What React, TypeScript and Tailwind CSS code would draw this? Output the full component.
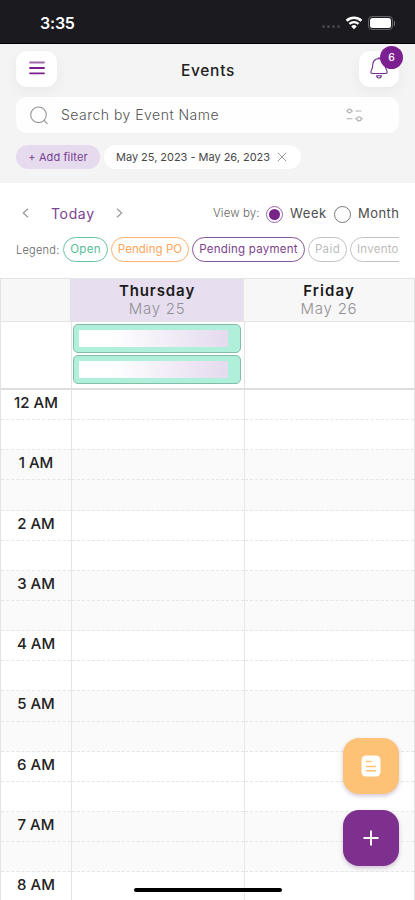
import React from "react";

const hours = ["12 AM", "1 AM", "2 AM", "3 AM", "4 AM", "5 AM", "6 AM", "7 AM", "8 AM"];

function StatusBar() {
  return (
    <div className="flex h-[44px] shrink-0 items-center justify-between border-b border-black bg-[#1b1a1f] pl-[40px] pr-[20px] pt-[3px]">
      <span className="text-[16px] font-semibold leading-5 tracking-[-0.2px] text-white">3:35</span>
      <div className="flex items-center">
        <div className="mr-[5px] mt-[7px] flex gap-[2px]">
          {[0, 1, 2, 3].map((i) => (
            <span key={i} className="size-[3px] rounded-full bg-[#45444a]" />
          ))}
        </div>
        <svg width="18" height="14" viewBox="0 0 18 14" fill="none" stroke="#fff">
          <path d="M1.6 4.7a10.8 10.8 0 0 1 14.8 0" strokeWidth="2.6" />
          <path d="M4.4 7.9a6.8 6.8 0 0 1 9.2 0" strokeWidth="2.2" />
          <path d="M9 13.2 6.3 10.4a3.9 3.9 0 0 1 5.4 0Z" fill="#fff" stroke="none" />
        </svg>
        <div className="ml-[5px] h-[14px] w-[25px] rounded-[4px] border border-[#66656a] p-[1px]">
          <div className="h-full rounded-[2.5px] bg-white" />
        </div>
        <span className="ml-[1px] h-[5px] w-[1.5px] rounded-r bg-[#77767b]" />
      </div>
    </div>
  );
}

function Header() {
  return (
    <div className="h-[139px] shrink-0 bg-[#f4f4f4] px-[16px] pt-[7px]">
      <div className="flex h-[36px] items-center justify-between">
        <button className="flex h-[36px] w-[41px] items-center justify-center rounded-[11px] bg-white shadow-[0_4px_14px_rgba(0,0,0,0.05)]">
          <svg className="-mt-[2px]" width="16" height="14" viewBox="0 0 16 14" stroke="#7b1f8d" strokeWidth="1.8" strokeLinecap="round">
            <path d="M1 1.5h14" stroke="#a06bad" />
            <path d="M1 7h14M1 12.3h14" />
          </svg>
        </button>
        <h1 className="mt-[3px] text-[15.5px] font-medium leading-5 tracking-[0.7px] text-[#222]">Events</h1>
        <button className="relative flex h-[36px] w-[40px] items-center justify-center rounded-[11px] bg-white shadow-[0_4px_14px_rgba(0,0,0,0.05)]">
          <svg className="-mt-[2px]" width="20" height="24" viewBox="0 0 20 24" fill="none" stroke="#70308b" strokeWidth="1.1" strokeLinejoin="round">
            <path d="M10 2.6c-4 0-6 2.8-6.2 6.200-.1 2.600-.3 3.700-1.500 5.600-.9 1.600-.6 3.100 1.300 3.100h12.800c1.900 0 2.200-1.500 1.300-3.100-1.200-1.900-1.400-3-1.500-5.600C16 5.400 14 2.600 10 2.600Z" />
            <path d="M10 1v1.600M7.600 19.800c.3 3 4.500 3 4.800 0Z" />
          </svg>
          <span className="absolute -right-[4px] -top-[5px] flex size-[23px] items-center justify-center rounded-full bg-[#7b1f91] text-[10.5px] font-medium text-white">6</span>
        </button>
      </div>
      <div className="mt-[10px] flex h-[36px] items-center rounded-[11px] bg-[#fefefe] pl-[14px] pr-[36px]">
        <svg width="18" height="19" viewBox="0 0 18 19" fill="none" stroke="#949494" strokeWidth="1.1" strokeLinecap="round">
          <circle cx="8.500" cy="8.800" r="7.800" />
          <path d="m14.300 14.700 2.900 3" />
        </svg>
        <span className="ml-[13px] flex-1 text-[14px] font-light leading-5 tracking-[0.48px] text-[#555]">Search by Event Name</span>
        <svg className="-mt-[1px]" width="17" height="14" viewBox="0 0 17 14" fill="none" stroke="#b0b0b0" strokeWidth="1.1" strokeLinecap="round">
          <circle cx="3.500" cy="3" r="1.900" />
          <path d="M.7 3h.8M5.600 3h1M10 3h5M1 10.800h5M9.500 10.800h1M15.500 10.800h1" />
          <circle cx="13" cy="10.800" r="2.100" />
        </svg>
      </div>
      <div className="mt-[12px] flex gap-[4px]">
        <div className="flex h-[24px] w-[84px] items-center justify-center rounded-full bg-[#e5daee] text-[11px] tracking-[0.1px] text-[#76418f]">+ Add filter</div>
        <div className="flex h-[24px] w-[197px] items-center rounded-full bg-white pl-[12px] text-[11px] text-[#484848]">
          <span className="whitespace-nowrap tracking-[-0.03px]">May 25, 2023 - May 26, 2023</span>
          <svg className="ml-[7px]" width="10" height="10" viewBox="0 0 10 10" stroke="#999" strokeWidth="1">
            <path d="m.7.7 8.600 8.600M9.300.7.7 9.300" />
          </svg>
        </div>
      </div>
    </div>
  );
}

function Controls() {
  return (
    <div className="h-[95px] shrink-0 bg-white pl-[16px] pt-[20px]">
      <div className="flex h-[22px] items-center">
        <svg className="-mt-[2px] ml-[6px]" width="7" height="10" viewBox="0 0 7 10" fill="none" stroke="#999" strokeWidth="1.2"><path d="M6 .7 1.300 5 6 9.300" /></svg>
        <span className="ml-[22px] w-[44px] text-[14px] leading-5 tracking-[0.65px] text-[#7c4294]">Today</span>
        <svg className="-mt-[2px] ml-[21px]" width="7" height="10" viewBox="0 0 7 10" fill="none" stroke="#999" strokeWidth="1.2"><path d="m1 .7 4.700 4.300L1 9.300" /></svg>
        <span className="ml-[90px] w-[47px] whitespace-nowrap text-[11.500px] font-light tracking-[0.1px] text-[#666]">View by:</span>
        <span className="ml-[6px] flex size-[17px] items-center justify-center rounded-full border border-[#9b62aa]"><i className="size-[11px] rounded-full bg-[#792489]" /></span>
        <span className="ml-[7px] w-[37px] text-[13px] tracking-[0.6px] text-[#4d4d4d]">Week</span>
        <span className="ml-[7px] size-[17px] rounded-full border border-[#777]" />
        <span className="ml-[7px] text-[13px] tracking-[0.45px] text-[#4d4d4d]">Month</span>
      </div>
      <div className="mt-[11px] flex h-[26px] w-[383px] items-center overflow-hidden whitespace-nowrap text-[11.500px]">
        <span className="w-[47px] shrink-0 pt-[2px] text-[11px] font-light tracking-[0.25px] text-[#666]">Legend:</span>
        <span className="flex h-[25px] w-[45px] shrink-0 items-center justify-center rounded-full border border-[#66c7a2] pt-[2px] tracking-[0.3px] text-[#58bd97]">Open</span>
        <span className="ml-[3px] flex h-[25px] w-[78px] shrink-0 items-center justify-center rounded-full border border-[#ffb06c] pt-[2px] tracking-[0.05px] text-[#ffa45a]">Pending PO</span>
        <span className="ml-[3px] flex h-[25px] w-[113px] shrink-0 items-center justify-center rounded-full border border-[#83579a] pt-[2px] tracking-[0.25px] text-[#7d438f]">Pending payment</span>
        <span className="ml-[3px] flex h-[25px] w-[39px] shrink-0 items-center justify-center rounded-full border border-[#c2c2c2] pt-[2px] tracking-[0.4px] text-[#bcbcbc]">Paid</span>
        <span className="ml-[3px] flex h-[25px] w-[64px] shrink-0 items-center rounded-l-full border border-[#c2c2c2] pl-[6px] pt-[2px] tracking-[0.25px] text-[#bcbcbc]">Invento</span>
      </div>
    </div>
  );
}

function DayHeading({ day, date, active }: { day: string; date: string; active?: boolean }) {
  return (
    <div className={active ? "bg-[#e7dff0] pt-[3px] text-center" : "border-l border-[#e5e5e5] bg-[#f7f7f7] pt-[3px] text-center"}>
      <div className={active ? "text-[15px] font-semibold leading-[18px] tracking-[0.9px] text-[#1b1b1b]" : "text-[15px] font-semibold leading-[18px] tracking-[1.1px] text-[#1b1b1b]"}>{day}</div>
      <div className="text-[15px] font-light leading-[18px] tracking-[0.75px] text-[#929096]">{date}</div>
    </div>
  );
}

function EventBar() {
  return (
    <div className="h-[29px] rounded-[5px] border border-[#83bca7] bg-[#b0f0da] py-[5px] pl-[5px] pr-[12px]">
      <div className="h-full bg-linear-to-r from-white from-20% to-[#e5daee]" />
    </div>
  );
}

function Calendar() {
  return (
    <div className="min-h-0 flex-1 overflow-hidden border-x border-[#e3e3e3] bg-white">
      <div className="grid h-[44px] grid-cols-[70px_172px_1fr] border-y border-[#e3e3e3]">
        <div className="border-r border-[#e3e3e3] bg-[#f7f7f7]" />
        <DayHeading day="Thursday" date="May 25" active />
        <DayHeading day="Friday" date="May 26" />
      </div>
      <div className="grid h-[68px] grid-cols-[71px_172px_1fr] border-b-2 border-[#dedede]">
        <div className="border-r border-[#e5e5e5]" />
        <div className="flex flex-col gap-[2px] pl-[1px] pr-[3px] pt-[2px]">
          <EventBar />
          <EventBar />
        </div>
        <div className="border-l border-[#e5e5e5]" />
      </div>
      {hours.map((hour, i) => (
        <div key={hour} className={i % 2 ? "grid h-[60.300px] grid-cols-[71px_172px_1fr] bg-[#fafafa]" : "grid h-[60.300px] grid-cols-[71px_172px_1fr] bg-white"}>
          <div className="border-r border-[#e6e6e6]">
            <div className="h-[30.150px] border-b border-dashed border-[#e6e6e6] pt-[3px] text-center text-[15px] font-medium leading-5 text-[#222]">{hour}</div>
            <div className="h-[30.150px] border-b border-dashed border-[#e6e6e6]" />
          </div>
          <div>
            <div className="h-[30.150px] border-b border-dashed border-[#e6e6e6]" />
            <div className="h-[30.150px] border-b border-dashed border-[#e6e6e6]" />
          </div>
          <div className="border-l border-[#e6e6e6]">
            <div className="h-[30.150px] border-b border-dashed border-[#e6e6e6]" />
            <div className="h-[30.150px] border-b border-dashed border-[#e6e6e6]" />
          </div>
        </div>
      ))}
    </div>
  );
}

export default function App() {
  return (
    <div className="relative flex h-[900px] w-[415px] flex-col overflow-hidden bg-white font-['Inter','Liberation_Sans',sans-serif]">
      <StatusBar />
      <Header />
      <Controls />
      <Calendar />
      <div className="absolute bottom-[34px] right-[16px] flex flex-col gap-[16px]">
        <button className="flex size-[56px] items-center justify-center rounded-[16px] bg-[#fdc275] shadow-[0_2px_4px_rgba(80,30,100,0.25)]">
          <svg width="20" height="22" viewBox="0 0 20 22" fill="none">
            <rect x=".5" y=".5" width="19" height="21" rx="4.500" fill="#fff" />
            <path d="M5.500 6.500h4.500M5.500 11.500h9M5.500 15.700h9" stroke="#fdc275" strokeWidth="1.500" strokeLinecap="round" />
          </svg>
        </button>
        <button className="flex size-[56px] items-center justify-center rounded-[16px] bg-[#7d308d] shadow-[0_2px_4px_rgba(80,30,100,0.25)]">
          <svg width="16" height="16" viewBox="0 0 16 16" stroke="#fff" strokeWidth="1.900"><path d="M8 .5v15M.5 8h15" /></svg>
        </button>
      </div>
      <div className="absolute bottom-[8px] left-[134px] h-[4px] w-[148px] rounded-full bg-black" />
    </div>
  );
}
